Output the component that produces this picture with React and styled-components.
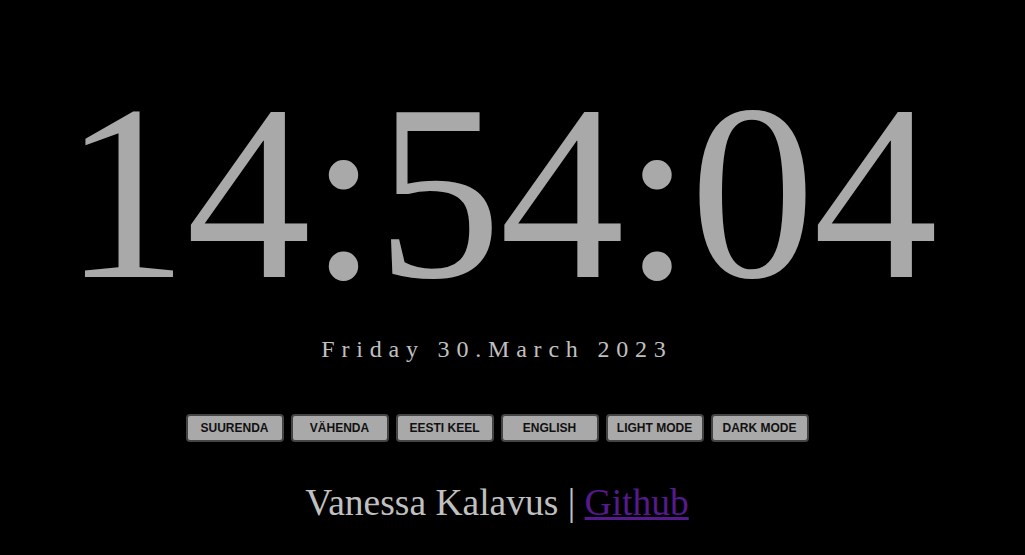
import styled, { createGlobalStyle } from "styled-components"

const GlobalStyle = createGlobalStyle`
    html, body {
        margin: 0;
        padding: 0;
        background-color: #000;
    }
`

const Page = styled.div`
    min-height: 555px;
    background-color: #000;
    display: flex;
    flex-direction: column;
    align-items: center;
    padding: 54px 31px 0 0;
    box-sizing: border-box;
    font-family: "Liberation Serif", "Times New Roman", serif;
`

const Clock = styled.h1`
    margin: 0 0 0 5px;
    font-size: 250px;
    font-weight: normal;
    line-height: 277px;
    letter-spacing: -2px;
    color: #a9a9a9;
`

const DateLine = styled.p`
    margin: 5px 0 0 0;
    font-size: 24px;
    line-height: 27px;
    letter-spacing: 6.8px;
    color: #c0c0c0;
`

const ButtonRow = styled.div`
    display: flex;
    gap: 7px;
    margin-top: 51px;
`

const Button = styled.button`
    width: 98px;
    height: 28px;
    padding: 0;
    background-color: #a9a9a9;
    border: 2px solid #444;
    border-radius: 4px;
    font-family: "Liberation Sans", Arial, sans-serif;
    font-size: 12px;
    font-weight: bold;
    color: #111;
    cursor: pointer;
`

const Footer = styled.p`
    margin: 40px 0 0 0;
    font-size: 37.5px;
    line-height: 42px;
    color: #c0c0c0;

    & a {
        color: #551a8b;
    }
`

const buttons = ["SUURENDA", "VÄHENDA", "EESTI KEEL", "ENGLISH", "LIGHT MODE", "DARK MODE"]

export default function App(){
    return (
        <>
            <GlobalStyle />
            <Page>
                <Clock>14:54:04</Clock>
                <DateLine>Friday 30.March 2023</DateLine>
                <ButtonRow>
                    {buttons.map((label) => <Button key={label}>{label}</Button>)}
                </ButtonRow>
                <Footer>Vanessa Kalavus | <a href="#">Github</a></Footer>
            </Page>
        </>
    )
}
